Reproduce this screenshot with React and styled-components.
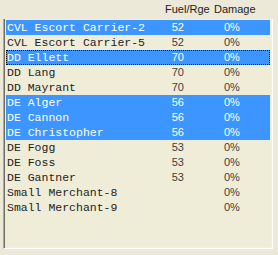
import React from 'react';
import styled, { createGlobalStyle } from "styled-components";

const GlobalStyle = createGlobalStyle`
	html, body {
		margin: 0;
		padding: 0;
		background: #ECE9D8;
	}
`;

const Page = styled.div`
	width: 278px;
	height: 255px;
	box-sizing: border-box;
	padding: 0 5px 0 3px;
	background: #ECE9D8;
	font-family: "Liberation Sans", Arial, sans-serif;
`;

const Header = styled.div`
	display: flex;
	height: 19px;
	line-height: 19px;
	padding-left: 162px;
	font-size: 11px;
	color: #222;

	span:first-child {
		width: 49px;
	}
`;

const List = styled.div`
	height: 230px;
	box-sizing: border-box;
	border-left: 1px solid #ACA899;
	border-right: 1px solid #fff;
	border-bottom: 1px solid #fff;
	box-shadow: inset 1px 0 0 #716F64, inset -1px -1px 0 #F1EFE2;
	background: #EFEDD8;
	padding: 1px 2px 0 2px;
`;

const Row = styled.div`
	display: grid;
	grid-template-columns: 154px 24px 40px 1fr;
	height: 15px;
	line-height: 15px;
	box-sizing: border-box;
	background: ${p => (p.selected ? '#3D95FF' : 'transparent')};
	color: ${p => (p.selected ? '#fff' : '#222')};
	outline: ${p => (p.focused ? '1px dotted #000' : 'none')};
	outline-offset: -1px;
`;

const Name = styled.span`
	font-family: "Liberation Mono", "Courier New", monospace;
	font-size: 11.5px;
	padding-left: 1px;
	white-space: nowrap;
`;

const Num = styled.span`
	font-size: 11px;
	text-align: ${p => (p.right ? 'right' : 'left')};
	color: ${p => (p.selected ? '#fff' : '#404040')};
`;

const ships = [
	{ name: 'CVL Escort Carrier-2', fuel: '52', sel: true },
	{ name: 'CVL Escort Carrier-5', fuel: '52' },
	{ name: 'DD Ellett', fuel: '70', sel: true, focus: true },
	{ name: 'DD Lang', fuel: '70' },
	{ name: 'DD Mayrant', fuel: '70' },
	{ name: 'DE Alger', fuel: '56', sel: true },
	{ name: 'DE Cannon', fuel: '56', sel: true },
	{ name: 'DE Christopher', fuel: '56', sel: true },
	{ name: 'DE Fogg', fuel: '53' },
	{ name: 'DE Foss', fuel: '53' },
	{ name: 'DE Gantner', fuel: '53' },
	{ name: 'Small Merchant-8', fuel: '' },
	{ name: 'Small Merchant-9', fuel: '' },
];

const App = () => {
	return (
		<>
			<GlobalStyle />
			<Page>
				<Header>
					<span>Fuel/Rge</span>
					<span>Damage</span>
				</Header>
				<List>
					{ships.map(s => (
						<Row key={s.name} selected={s.sel} focused={s.focus}>
							<Name>{s.name}</Name>
							<Num right selected={s.sel}>{s.fuel}</Num>
							<span />
							<Num selected={s.sel}>0%</Num>
						</Row>
					))}
				</List>
			</Page>
		</>
	);
};

export default App;
